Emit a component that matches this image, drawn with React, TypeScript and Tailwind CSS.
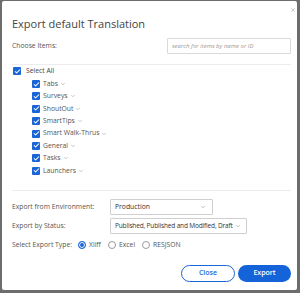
import { Check, ChevronDown, X } from 'lucide-react';

const items = ['Tabs', 'Surveys', 'ShoutOut', 'SmartTips', 'Smart Walk-Thrus', 'General', 'Tasks', 'Launchers'];

function Box() {
  return (
    <span className="w-[8px] h-[8px] rounded-[1px] bg-[#1a66d6] flex items-center justify-center shrink-0">
      <Check size={7} strokeWidth={3.5} className="text-white" />
    </span>
  );
}

function Radio({ on }: { on?: boolean }) {
  return (
    <span
      className={`w-[8px] h-[8px] rounded-full border shrink-0 ${
        on ? 'border-[#1a66d6] bg-[#1a66d6] shadow-[inset_0_0_0_1px_white]' : 'border-[#9a9a9a] bg-white'
      }`}
    />
  );
}

export default function App() {
  return (
    <div className="w-[300px] h-[293px] bg-[#6d6d6d] pt-[1px] pl-[2px] font-['Open_Sans',sans-serif] text-[#555] whitespace-nowrap">
      <div className="relative w-[295px] h-[289px] bg-white rounded-[2px] pl-[10px] pr-[6px]">
        {/* Close */}
        <X size={6} strokeWidth={2} className="absolute right-[1px] top-[6px] text-[#999]" />

        {/* Header */}
        <h1 className="pt-[15px] text-[11px] leading-[16px] text-[#444]">Export default Translation</h1>

        {/* Choose items */}
        <div className="mt-[6px] flex items-center justify-between">
          <span className="text-[6.8px]">Choose Items:</span>
          <div className="w-[124px] h-[16px] border border-[#d9d9d9] rounded-[1px] flex items-center px-[4px]">
            <span className="text-[6px] italic text-[#999]">search for items by name or ID</span>
          </div>
        </div>
        <div className="mt-[10px] h-px bg-[#ececec]" />

        {/* Item list */}
        <div className="mt-[2px] pl-[1px]">
          <label className="flex items-center gap-[5px] h-[8px] text-[6.8px] text-[#444]">
            <Box />
            Select All
          </label>
          <div className="mt-[5px] pl-[19px] flex flex-col gap-[4.4px]">
            {items.map(name => (
              <label key={name} className="flex items-center gap-[2px] h-[8px] text-[6.8px] text-[#555]">
                <Box />
                <span className="ml-[1px]">{name}</span>
                <ChevronDown size={6} strokeWidth={1.6} className="text-[#777]" />
              </label>
            ))}
          </div>
        </div>
        <div className="mt-[15px] h-px bg-[#ececec]" />

        {/* Options */}
        <div className="mt-[8px] flex flex-col gap-[3px] text-[6.8px]">
          <div className="flex items-center">
            <span className="w-[98px]">Export from Environment:</span>
            <div className="w-[103px] h-[16px] border border-[#cfcfcf] rounded-[1px] flex items-center justify-between pl-[4px] pr-[6px] text-[#333]">
              Production
              <ChevronDown size={6} strokeWidth={1.6} className="text-[#666]" />
            </div>
          </div>
          <div className="flex items-center">
            <span className="w-[98px]">Export by Status:</span>
            <div className="w-[137px] h-[16px] border border-[#cfcfcf] rounded-[1px] flex items-center justify-between pl-[4px] pr-[5px] text-[#333]">
              <span className="text-[6.5px] tracking-[-0.15px]">Published, Published and Modified, Draft</span>
              <ChevronDown size={6} strokeWidth={1.6} className="text-[#666]" />
            </div>
          </div>
          <div className="flex items-center h-[10px] mt-[3px]">
            <span className="w-[66px]">Select Export Type:</span>
            <span className="flex items-center gap-[3px] w-[30px]"><Radio on />Xliff</span>
            <span className="flex items-center gap-[3px] w-[34px]"><Radio />Excel</span>
            <span className="flex items-center gap-[3px]"><Radio />RESJSON</span>
          </div>
        </div>

        {/* Footer */}
        <div className="mt-[15px] flex justify-end gap-[3px]">
          <button className="w-[54px] h-[17px] rounded-full border border-[#1a66d6] text-[#1a66d6] text-[7px] font-semibold bg-white">
            Close
          </button>
          <button className="w-[53px] h-[17px] rounded-full bg-[#1463d8] text-white text-[7px] font-semibold">
            Export
          </button>
        </div>
      </div>
    </div>
  );
}
